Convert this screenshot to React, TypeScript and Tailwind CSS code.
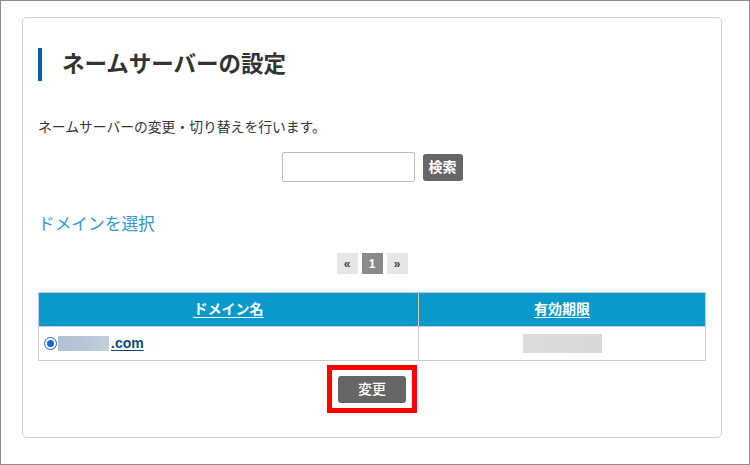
import React from "react";

const jp = { fontFamily: '"Liberation Sans", "Noto Sans CJK JP", sans-serif' };

function Radio() {
  return (
    <span className="inline-flex w-[13px] h-[13px] rounded-full border-[1.5px] border-[#1b62d4] bg-white items-center justify-center shrink-0">
      <span className="w-[7px] h-[7px] rounded-full bg-[#1b62d4]" />
    </span>
  );
}

function PageBox({ label, active }: { label: string; active?: boolean }) {
  return (
    <span
      className={
        "w-[21px] h-[21px] flex items-center justify-center text-[12px] font-bold " +
        (active ? "bg-[#8a8a8a] text-white" : "bg-[#e6e6e6] text-[#444]")
      }
    >
      {label}
    </span>
  );
}

export default function App() {
  return (
    <div
      style={jp}
      className="w-[750px] h-[465px] box-border border border-[#8e8e8e] bg-white pl-[21px] pt-[16px]"
    >
      <div className="w-[700px] h-[421px] box-border border border-[#cfcfcf] rounded-[5px] px-[15px] flex flex-col">
        <h1 className="mt-[30px] h-[33px] border-l-[4px] border-[#0b5cb2] pl-[20px] text-[22.5px] leading-[33px] font-bold text-[#333]">
          ネームサーバーの設定
        </h1>

        <p className="mt-[37px] text-[13.8px] leading-[20px] text-[#333]">
          ネームサーバーの変更・切り替えを行います。
        </p>

        <div className="mt-[14px] flex items-center justify-center gap-[8px]">
          <input
            type="text"
            className="w-[133px] h-[30px] box-border border border-[#bdbdbd] rounded-[2px] bg-white outline-none"
          />
          <button className="w-[40px] h-[27px] rounded-[3px] bg-[#666] text-white text-[14px] font-bold leading-none">
            検索
          </button>
        </div>

        <div className="mt-[31px] text-[16.7px] leading-[24px] text-[#3399cc]">
          ドメインを選択
        </div>

        <div className="mt-[16px] flex justify-center gap-[4px]">
          <PageBox label="«" />
          <PageBox label="1" active />
          <PageBox label="»" />
        </div>

        <table className="mt-[18px] w-[668px] border-collapse">
          <thead>
            <tr className="h-[34px] bg-[#0a99cb]">
              <th className="w-[380px] border border-[#cccccc] text-[14px] font-bold text-white">
                <span className="underline underline-offset-[3px]">ドメイン名</span>
              </th>
              <th className="border border-[#cccccc] text-[14px] font-bold text-white">
                <span className="underline underline-offset-[3px]">有効期限</span>
              </th>
            </tr>
          </thead>
          <tbody>
            <tr className="h-[34px]">
              <td className="border border-[#cccccc] pl-[5px]">
                <div className="flex items-center">
                  <Radio />
                  <span className="ml-[1px] w-[51px] h-[15px] bg-gradient-to-r from-[#b0c1d2] via-[#b6c6d6] to-[#c3cfdb]" />
                  <span className="ml-[2px] text-[14px] font-bold text-[#0b4a7c] underline underline-offset-[2px]">
                    .com
                  </span>
                </div>
              </td>
              <td className="border border-[#cccccc]">
                <div className="flex justify-center">
                  <span className="w-[79px] h-[19px] bg-gradient-to-r from-[#dcdcdc] to-[#d8d8d8]" />
                </div>
              </td>
            </tr>
          </tbody>
        </table>

        <div className="mt-[4px] flex justify-center">
          <div className="w-[90px] h-[48px] box-border border-[5px] border-[#ff0000] flex items-center justify-center">
            <button className="w-[68px] h-[27px] rounded-[3px] bg-[#666] text-white text-[14px] font-medium leading-none">
              変更
            </button>
          </div>
        </div>
      </div>
    </div>
  );
}
